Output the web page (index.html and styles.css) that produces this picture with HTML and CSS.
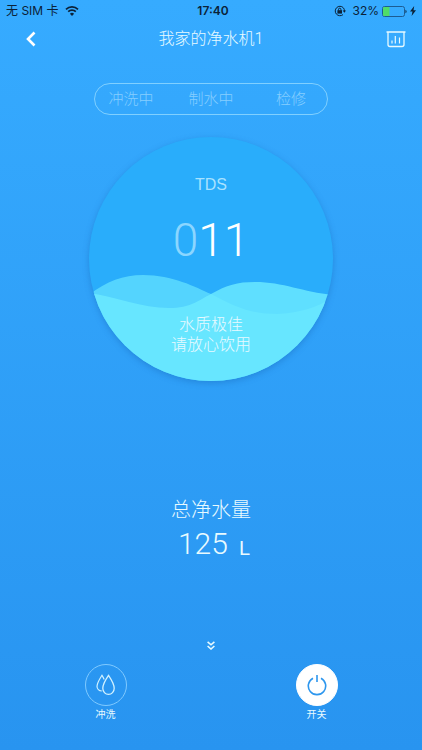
FILE: index.html
```html
<!DOCTYPE html>
<html lang="zh-CN">
<head>
  <meta charset="UTF-8">
  <meta name="viewport" content="width=device-width, initial-scale=1.0">
  <title>我家的净水机1</title>
  <link rel="stylesheet" href="styles.css">
</head>
<body>

  <!-- Phone status bar -->
  <div class="status-bar">
    <div class="status-left">
      <span>无 SIM 卡</span>
      <svg width="14" height="10" viewBox="0 0 14 10">
        <path d="M1 3.4a8.600 8.600 0 0 1 12 0M3.200 5.700a5.400 5.400 0 0 1 7.600 0" fill="none" stroke="#0b2238" stroke-width="1.700"/>
        <path d="M7 10 4.900 7.800a3 3 0 0 1 4.200 0z" fill="#0b2238"/>
      </svg>
    </div>
    <div class="status-time">17:40</div>
    <div class="status-right">
      <svg width="12" height="12" viewBox="0 0 12 12">
        <path d="M9.200 2.600A4.700 4.700 0 1 0 9 9.600M9.400 2.800a4.700 4.700 0 0 1 1 3.400" fill="none" stroke="#0b2238"/>
        <path d="M8.700 5.600h3.300l-1.600 2.200z" fill="#0b2238"/>
        <path d="M3.400 5.200h4.600v3.400H3.400z" fill="#0b2238"/>
        <path d="M4.500 5.500V4.400a1.200 1.200 0 0 1 2.400 0v1.100" fill="none" stroke="#0b2238"/>
      </svg>
      <span class="battery-text">32%</span>
      <svg width="25" height="11" viewBox="0 0 25 11">
        <rect x=".5" y=".5" width="22" height="10" rx="2" fill="none" stroke="#1c5c93"/>
        <path d="M2 1h5.500v9H2a1 1 0 0 1-1-1V2a1 1 0 0 1 1-1z" fill="#4fdc6a"/>
        <path d="M23.500 3.800c1.400.4 1.400 3 0 3.400z" fill="#0b2238"/>
      </svg>
      <svg width="6" height="10" viewBox="0 0 6 10">
        <path d="M4.200 0 0 5.600h2.500L1.600 10 6 4.200H3.500z" fill="#0b2238"/>
      </svg>
    </div>
  </div>

  <header class="nav-bar">
    <button class="icon-button" type="button" aria-label="返回">
      <svg width="10" height="16" viewBox="0 0 10 16">
        <path d="M8.500 1.500 2 8l6.500 6.500" fill="none" stroke="#fff" stroke-width="2.600"/>
      </svg>
    </button>
    <h1 class="nav-title">我家的净水机1</h1>
    <button class="icon-button icon-button-end" type="button" aria-label="统计">
      <svg width="20" height="17" viewBox="0 0 20 17">
        <path d="M.5 1h19M2 1v12.500a2 2 0 0 0 2 2h12a2 2 0 0 0 2-2V1" fill="none" stroke="#e8faff" stroke-width="1.300"/>
        <path d="M6 12.500V9.500M9.300 12.500V5M13.500 12.500V6.500" fill="none" stroke="#e8faff" stroke-width="1.200"/>
      </svg>
    </button>
  </header>

  <main class="content">
    <ul class="state-list">
      <li>冲洗中</li>
      <li>制水中</li>
      <li>检修</li>
    </ul>

    <!-- Water quality gauge -->
    <section class="gauge">
      <svg class="gauge-waves" viewBox="0 0 244 244">
        <path d="M0 158C18 144 34 138 54 138C84 138 106 150 122 157C146 170 162 177 188 177C210 176 228 171 244 160V244H0z" fill="#6beaff" fill-opacity=".65"/>
        <path d="M0 156C28 160 52 171 80 171C102 171 110 163 122 157C138 148 148 145 166 145C194 145 214 155 244 158V244H0z" fill="#6beaff" fill-opacity=".82"/>
      </svg>
      <div class="gauge-label">TDS</div>
      <div class="gauge-value"><span class="leading-zero">0</span>11</div>
      <p class="gauge-text">水质极佳<br>请放心饮用</p>
    </section>

    <section class="total">
      <h2 class="total-label">总净水量</h2>
      <div class="total-value">125 <span class="total-unit">L</span></div>
    </section>
  </main>

  <footer class="footer">
    <button class="expand-button" type="button" aria-label="展开">
      <svg width="8" height="9" viewBox="0 0 8 9">
        <path d="M.6.8 4 3.800 7.400.8M.6 5 4 8l3.400-3" fill="none" stroke="#e8faff" stroke-width="1.600"/>
      </svg>
    </button>
    <div class="actions">
      <button class="action" type="button">
        <span class="action-icon">
          <svg width="20" height="22" viewBox="0 0 20 22">
            <path d="M8.200 5.500C7.600 4 6.800 2.500 6 1.300 4 4.500 1 9 1 12.300c0 2.700 2 4.700 4.800 4.700" fill="none" stroke="#d2f2ff" stroke-width="1.200"/>
            <path d="M12.500 1.300C10 5 6.800 10 6.800 14.200c0 3.600 2.500 6.200 5.700 6.200s5.700-2.600 5.700-6.200C18.200 10 15 5 12.500 1.300z" fill="none" stroke="#d2f2ff" stroke-width="1.300"/>
          </svg>
        </span>
        冲洗
      </button>
      <button class="action" type="button">
        <span class="action-icon action-icon-on">
          <svg width="20" height="22" viewBox="0 0 20 22">
            <path d="M6 4.200a8.700 8.700 0 1 0 8 0M10 1v7" fill="none" stroke="#2e97ee" stroke-width="1.600"/>
          </svg>
        </span>
        开关
      </button>
    </div>
  </footer>

</body>
</html>
```
FILE: styles.css
```css
* {
  box-sizing: border-box;
}

body {
  display: flex;
  flex-direction: column;
  min-height: 100vh;
  margin: 0;
  background: linear-gradient(#36abff, #2894f0);
  color: #e8faff;
  font-family: Roboto, "Noto Sans CJK SC", sans-serif;
  font-weight: 300;
}

button {
  padding: 0;
  border: 0;
  background: none;
  color: inherit;
  font: inherit;
  cursor: pointer;
}

svg {
  display: block;
}

/* Status bar */
.status-bar {
  display: grid;
  grid-template-columns: 1fr auto 1fr;
  align-items: center;
  height: 22px;
  padding: 0 6px;
  color: #0b2238;
  font-family: Inter, "Noto Sans CJK SC", sans-serif;
  font-size: 12px;
  font-weight: 400;
  line-height: 20px;
}

.status-left,
.status-right {
  display: flex;
  align-items: center;
  gap: 6px;
}

.status-right {
  justify-content: flex-end;
  gap: 3px;
}

.status-time {
  padding-left: 4px;
  font-weight: 600;
}

.battery-text {
  margin-left: 3px;
}

/* Title bar */
.nav-bar {
  display: grid;
  grid-template-columns: 1fr auto 1fr;
  align-items: center;
  height: 34px;
  padding: 0 16px 0 26px;
}

.icon-button {
  display: flex;
  width: 20px;
}

.icon-button-end {
  justify-self: end;
}

.nav-title {
  margin: 0;
  padding-right: 10px;
  font-size: 16px;
  font-weight: 300;
  line-height: 20px;
}

/* Main content */
.content {
  display: flex;
  flex: 1;
  flex-direction: column;
  align-items: center;
}

.state-list {
  display: grid;
  grid-template-columns: repeat(3, 1fr);
  gap: 8px;
  width: 234px;
  height: 32px;
  margin: 27px 0 22px;
  padding: 0;
  border: 1px solid #80d0ff;
  border-radius: 16px;
  color: #85ceff;
  font-size: 15px;
  line-height: 30px;
  text-align: center;
  list-style: none;
}

.gauge {
  position: relative;
  width: 244px;
  height: 244px;
  padding-top: 38px;
  border-radius: 50%;
  background: #29adfb;
  box-shadow: 0 2px 6px rgba(16, 90, 170, 0.35);
  text-align: center;
}

/* Waves lie behind the text of the gauge */
.gauge-waves {
  position: absolute;
  inset: 0;
  border-radius: 50%;
}

.gauge-label,
.gauge-value,
.gauge-text {
  position: relative;
}

.gauge-label {
  color: #a8e2ff;
  font-family: "Liberation Sans", sans-serif;
  font-size: 16px;
  line-height: 20px;
}

.gauge-value {
  margin-top: 20px;
  color: #fff;
  font-size: 46px;
  line-height: 50px;
}

.leading-zero {
  color: #8bd6ff;
}

.gauge-text {
  margin: 50px 0 0;
  font-size: 16px;
  line-height: 20px;
}

.total {
  margin-top: 114px;
  text-align: center;
}

.total-label {
  margin: 0;
  font-size: 20px;
  font-weight: 300;
  line-height: 30px;
}

.total-value {
  display: flex;
  align-items: flex-end;
  justify-content: center;
  gap: 11px;
  padding-left: 6px;
  font-size: 30px;
  line-height: 38px;
}

.total-unit {
  font-family: "Liberation Sans", sans-serif;
  font-size: 20px;
  line-height: 30px;
}

/* Bottom controls */
.footer {
  display: flex;
  flex-direction: column;
  align-items: center;
  padding-bottom: 28px;
}

.expand-button {
  padding: 4px;
}

.actions {
  display: flex;
  justify-content: space-around;
  width: 100%;
  margin-top: 10px;
}

.action {
  display: flex;
  flex-direction: column;
  align-items: center;
  gap: 1px;
  font-size: 10px;
  font-weight: 400;
  line-height: 15px;
}

.action-icon {
  display: flex;
  align-items: center;
  justify-content: center;
  width: 42px;
  height: 42px;
  border: 1px solid #80caff;
  border-radius: 50%;
}

.action-icon-on {
  border-color: #fff;
  background: #fff;
}
```
